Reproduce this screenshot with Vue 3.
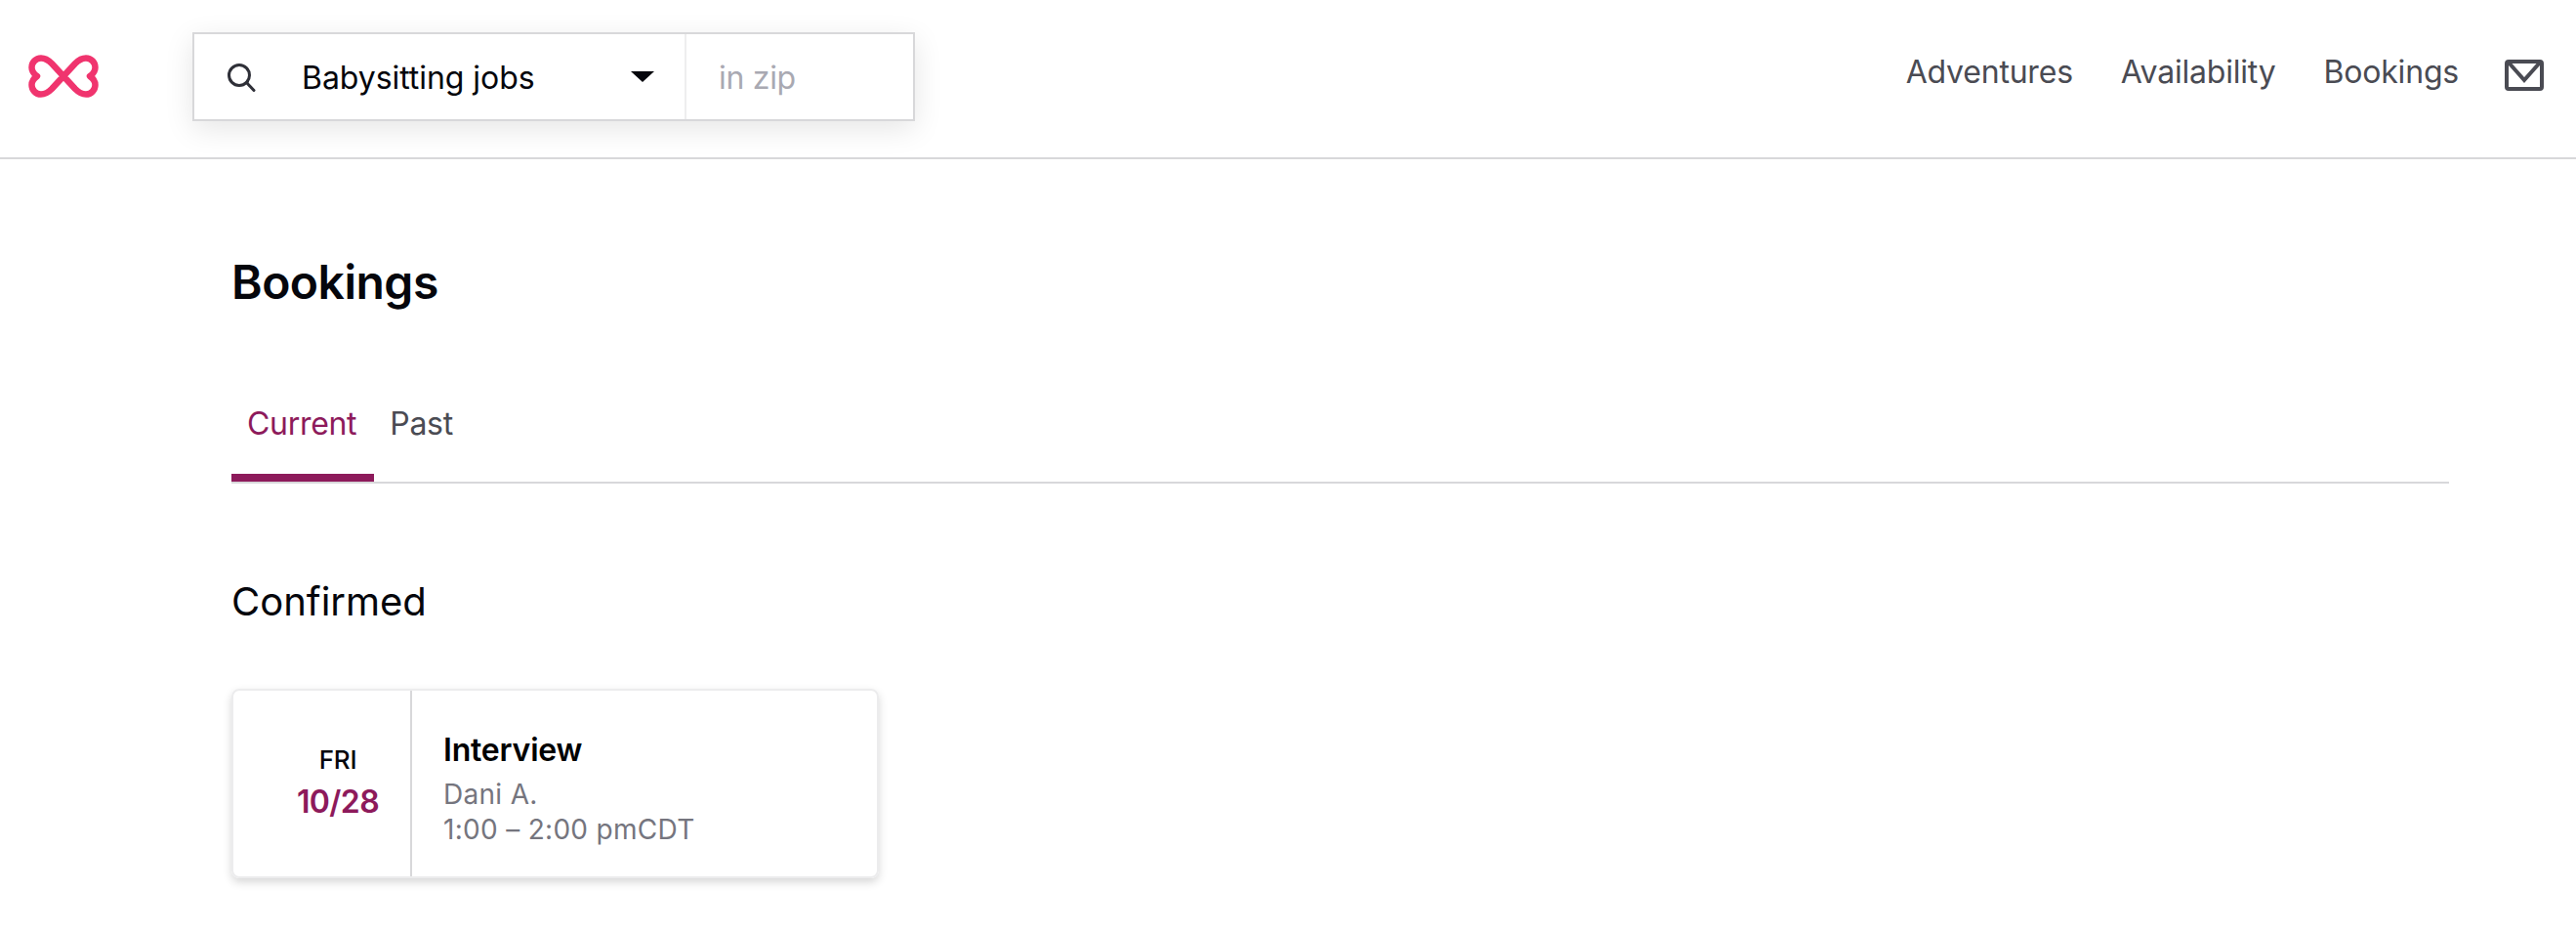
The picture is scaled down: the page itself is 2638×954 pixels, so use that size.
<template>
  <div class="page">
    <header class="topbar">
      <a class="logo" aria-label="Home">
        <svg width="72" height="44" viewBox="0 0 72 44" fill="none">
          <path
            d="M36 22L24 9C20 5 16.5 3.5 13 3.5C7.5 3.5 3.5 8 3.5 13C3.5 17 6 20 9 22C6 24 3.5 27 3.5 31C3.5 36 7.5 40.5 13 40.5C16.5 40.5 20 39 24 35L36 22L48 9C52 5 55.5 3.5 59 3.5C64.5 3.5 68.5 8 68.5 13C68.5 17 66 20 63 22C66 24 68.5 27 68.5 31C68.5 36 64.5 40.5 59 40.5C55.5 40.5 52 39 48 35Z"
            stroke="#f0346e"
            stroke-width="6.5"
            stroke-linejoin="round"
          />
        </svg>
      </a>

      <div class="search">
        <div class="search__main">
          <svg class="search__icon" width="30" height="30" viewBox="0 0 30 30" fill="none">
            <circle cx="13" cy="13" r="10.5" stroke="#2f3038" stroke-width="3" />
            <path d="M20.5 20.5L28 28.5" stroke="#2f3038" stroke-width="3" stroke-linecap="round" />
          </svg>
          <span class="search__type">Babysitting jobs</span>
          <span class="search__caret"></span>
        </div>
        <div class="search__zip">in zip</div>
      </div>

      <nav class="nav">
        <a v-for="item in navItems" :key="item" class="nav__link">{{ item }}</a>
        <svg class="nav__mail" width="40" height="32" viewBox="0 0 40 32" fill="none">
          <rect x="2" y="2" width="36" height="28" rx="2" stroke="#4a4b53" stroke-width="4" />
          <path d="M4 3L20 21L36 3" stroke="#4a4b53" stroke-width="4" />
        </svg>
      </nav>
    </header>

    <main class="content">
      <h1 class="title">Bookings</h1>

      <div class="tabs">
        <a
          v-for="tab in tabs"
          :key="tab.label"
          class="tab"
          :class="{ 'tab--active': tab.active }"
        >{{ tab.label }}</a>
      </div>

      <h2 class="section">Confirmed</h2>

      <article class="card">
        <div class="card__date">
          <span class="card__day">FRI</span>
          <span class="card__num">10/28</span>
        </div>
        <div class="card__body">
          <strong class="card__title">Interview</strong>
          <span class="card__line card__line--first">Dani A.</span>
          <span class="card__line">1:00 – 2:00 pmCDT</span>
        </div>
      </article>
    </main>
  </div>
</template>

<script setup>
const navItems = ['Adventures', 'Availability', 'Bookings']

const tabs = [
  { label: 'Current', active: true },
  { label: 'Past', active: false },
]
</script>

<style>
html,
body {
  background: #fff;
}
</style>

<style scoped>
.page {
  min-height: 954px;
  font-family: Inter, 'Liberation Sans', sans-serif;
  color: #05060c;
  background: #fff;
}

.topbar {
  height: 163px;
  box-sizing: border-box;
  padding: 0 33px 0 29px;
  border-bottom: 2px solid #d8d8da;
  display: flex;
  align-items: flex-start;
}

.logo {
  margin-top: 56px;
  display: block;
  height: 44px;
}

.search {
  width: 740px;
  height: 91px;
  margin: 33px 0 0 96px;
  box-sizing: border-box;
  border: 2px solid #d8d8da;
  display: flex;
  box-shadow: 0 8px 28px rgba(0, 0, 0, 0.1);
}

.search__main {
  width: 504px;
  box-sizing: border-box;
  padding: 0 31px 0 33px;
  border-right: 2px solid #eeeeef;
  display: flex;
  align-items: center;
}

.search__icon {
  flex: 0 0 auto;
}

.search__type {
  margin-left: 47px;
  padding-top: 2px;
  font-size: 32px;
  letter-spacing: -0.05px;
  color: #05060c;
}

.search__caret {
  margin-left: auto;
  width: 0;
  height: 0;
  border-left: 12px solid transparent;
  border-right: 12px solid transparent;
  border-top: 11px solid #05060c;
}

.search__zip {
  padding: 2px 0 0 33px;
  display: flex;
  align-items: center;
  font-size: 32px;
  letter-spacing: -0.3px;
  color: #a9a9b2;
}

.nav {
  margin-left: auto;
  padding-top: 52px;
  display: flex;
  align-items: flex-start;
  gap: 49px;
}

.nav__link {
  font-size: 32px;
  line-height: 44px;
  letter-spacing: -0.2px;
  color: #4a4b53;
}

.nav__mail {
  margin: 9px 0 0 -2px;
}

.content {
  width: 2271px;
  margin-left: 237px;
}

.title {
  margin: 0;
  padding-top: 96px;
  font-size: 48px;
  line-height: 60px;
  font-weight: 600;
  letter-spacing: -0.5px;
}

.tabs {
  margin-top: 64px;
  height: 112px;
  box-sizing: border-box;
  border-bottom: 2px solid #d8d8da;
  display: flex;
}

.tab {
  height: 110px;
  box-sizing: border-box;
  padding: 31px 18px 0 16px;
  font-size: 32px;
  line-height: 40px;
  letter-spacing: -0.3px;
  color: #4a4b53;
}

.tab--active {
  color: #8d1a5b;
  border-bottom: 8px solid #8d1a5b;
}

.section {
  margin: 0;
  padding-top: 96px;
  font-size: 40px;
  line-height: 50px;
  font-weight: 400;
  letter-spacing: 0;
}

.card {
  width: 663px;
  height: 194px;
  margin-top: 64px;
  box-sizing: border-box;
  border: 2px solid #ececed;
  border-radius: 8px;
  display: flex;
  box-shadow: 0 4px 10px rgba(0, 0, 0, 0.16);
}

.card__date {
  width: 183px;
  flex: 0 0 auto;
  box-sizing: border-box;
  padding: 57px 0 0 33px;
  border-right: 2px solid #d8d8da;
  display: flex;
  flex-direction: column;
  align-items: center;
}

.card__day {
  font-size: 26px;
  line-height: 28px;
  font-weight: 500;
  letter-spacing: -0.2px;
}

.card__num {
  margin-top: 9px;
  font-size: 32px;
  line-height: 40px;
  font-weight: 600;
  letter-spacing: -0.6px;
  color: #8d1a5b;
}

.card__body {
  padding: 39px 0 0 32px;
  display: flex;
  flex-direction: column;
}

.card__title {
  font-size: 32px;
  line-height: 44px;
  font-weight: 600;
  letter-spacing: -0.2px;
  color: #000;
}

.card__line {
  font-size: 28px;
  line-height: 36px;
  letter-spacing: 0.3px;
  color: #75757e;
}

.card__line--first {
  margin-top: 5px;
}
</style>
